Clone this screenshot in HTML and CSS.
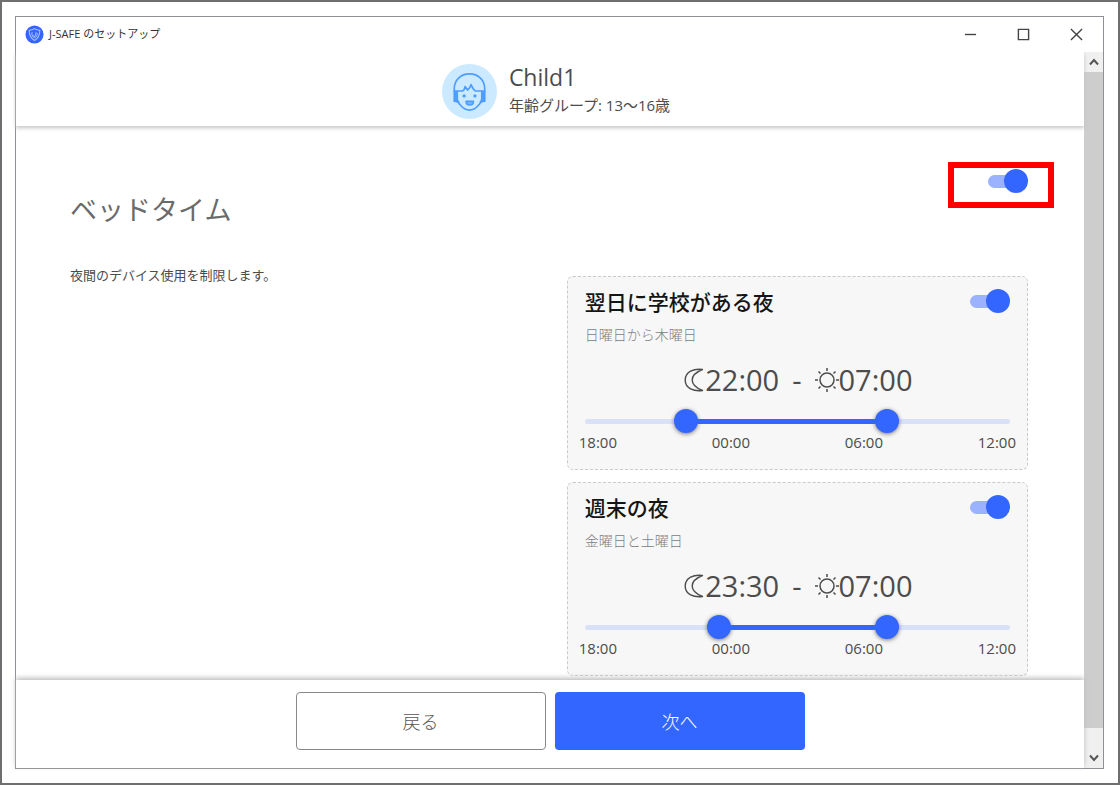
FILE: index.html
```html
<!DOCTYPE html>
<html lang="ja">
<head>
<meta charset="utf-8">
<meta name="viewport" content="width=device-width, initial-scale=1">
<title>J-SAFE のセットアップ</title>
<link rel="stylesheet" href="styles.css">
</head>
<body>
<svg class="defs" aria-hidden="true">
  <symbol id="moon" viewBox="0 0 20 24">
    <path d="M18.500 1.500C10 .3 1.200 3.500 1.200 12S10 23.700 18.500 22.500C13.500 20.500 8.200 17.500 8.200 12s5.300-8.500 10.300-10.500Z" fill="none" stroke="currentColor" stroke-width="1.400" stroke-linejoin="round"/>
  </symbol>
  <symbol id="sun" viewBox="0 0 24 24">
    <g fill="none" stroke="currentColor" stroke-width="1.500">
      <circle cx="12" cy="12" r="7"/>
      <path d="M12 0v3M12 21v3M0 12h3M21 12h3M3.500 3.500l2 2M18.500 18.500l2 2M3.500 20.500l2-2M18.500 5.500l2-2"/>
    </g>
  </symbol>
</svg>
<div class="window">
  <div class="titlebar">
    <svg class="logo" viewBox="0 0 20 20" aria-hidden="true">
      <circle cx="10" cy="10" r="9.500" fill="#3366ff"/>
      <path d="M10 3.800c1.800 1.300 3.600 1.600 5.600 1.700 0 5.100-1.400 8.400-5.600 10.800-4.200-2.400-5.600-5.700-5.600-10.800 2-.1 3.800-.4 5.600-1.700Z" fill="none" stroke="#a9beff" stroke-width="1.100"/>
      <path d="M11.800 7.500 10.300 12H9.200L7.800 10.200M7.500 7.400c-.9 3.200.3 5.400 2.500 6 2-.5 3.200-2.400 2.800-5" fill="none" stroke="#a9beff" stroke-width="1"/>
    </svg>
    <span class="app-name">J-SAFE のセットアップ</span>
    <div class="window-controls">
      <button type="button" aria-label="最小化"><svg viewBox="0 0 14 14"><path d="M1 7h12"/></svg></button>
      <button type="button" aria-label="最大化"><svg viewBox="0 0 14 14"><path d="M1.500 1.500h11v11h-11z"/></svg></button>
      <button type="button" aria-label="閉じる"><svg viewBox="0 0 14 14"><path d="m1 1 12 12M13 1 1 13"/></svg></button>
    </div>
  </div>

  <div class="viewport">
    <div class="page">
      <header class="profile">
        <svg class="avatar" viewBox="0 0 56 56" aria-hidden="true">
          <circle cx="28" cy="28" r="28" fill="#cbeaff"/>
          <g fill="none" stroke="#4d9cff" stroke-width="1.700" stroke-linejoin="round" stroke-linecap="round">
            <path d="M12.500 38V25c0-8.500 6.500-15 15.500-15s15.500 6.500 15.500 15v13"/>
            <path d="M12.500 27.500h8.500c1.700-.8 2.200-2.500 2.500-4.500l2.500 3.500c2-1.300 3-3 3.500-5.500 1.200 3 2.800 5 4.500 6.500h9.500"/>
            <path d="M15.500 28v7c0 3.500 5.500 12 12.500 12s12.500-8.500 12.500-12v-7"/>
            <path d="M14 29v8.500l2.500 1M42 29v8.500l-2.500 1" stroke-width="2.400"/>
            <path d="M24.500 38h7.500c0 5-7.500 5-7.500 0Z" fill="#79b7ff"/>
          </g>
          <circle cx="22.500" cy="32.500" r="1.700" fill="#4d9cff"/>
          <circle cx="33.500" cy="32.500" r="1.700" fill="#4d9cff"/>
        </svg>
        <div>
          <div class="profile-name">Child1</div>
          <div class="profile-age">年齢グループ: 13～16歳</div>
        </div>
      </header>

      <main class="content">
        <section class="intro">
          <h1>ベッドタイム</h1>
          <p>夜間のデバイス使用を制限します。</p>
        </section>

        <section class="settings">
          <div class="highlight">
            <input class="switch" type="checkbox" role="switch" aria-label="ベッドタイム" checked>
          </div>

          <div class="cards">
            <article class="card">
              <div class="card-head">
                <label for="school">翌日に学校がある夜</label>
                <input class="switch" id="school" type="checkbox" role="switch" checked>
              </div>
              <p class="days">日曜日から木曜日</p>
              <div class="times">
                <svg class="moon"><use href="#moon"/></svg><span>22:00</span><span class="dash">-</span><svg class="sun"><use href="#sun"/></svg><span>07:00</span>
              </div>
              <div class="slider">
                <div class="rail"><div class="fill" style="left:22.22%;width:50%"></div></div>
                <input type="range" min="0" max="1080" step="15" value="240" aria-label="開始時刻">
                <input type="range" min="0" max="1080" step="15" value="780" aria-label="終了時刻">
              </div>
              <div class="ticks"><span>18:00</span><span>00:00</span><span>06:00</span><span>12:00</span></div>
            </article>

            <article class="card">
              <div class="card-head">
                <label for="weekend">週末の夜</label>
                <input class="switch" id="weekend" type="checkbox" role="switch" checked>
              </div>
              <p class="days">金曜日と土曜日</p>
              <div class="times">
                <svg class="moon"><use href="#moon"/></svg><span>23:30</span><span class="dash">-</span><svg class="sun"><use href="#sun"/></svg><span>07:00</span>
              </div>
              <div class="slider">
                <div class="rail"><div class="fill" style="left:30.56%;width:41.67%"></div></div>
                <input type="range" min="0" max="1080" step="15" value="330" aria-label="開始時刻">
                <input type="range" min="0" max="1080" step="15" value="780" aria-label="終了時刻">
              </div>
              <div class="ticks"><span>18:00</span><span>00:00</span><span>06:00</span><span>12:00</span></div>
            </article>
          </div>
        </section>
      </main>

      <footer class="actions">
        <button class="back" type="button">戻る</button>
        <button class="next" type="button">次へ</button>
      </footer>
    </div>

    <div class="scrollbar">
      <button type="button" aria-label="上へスクロール"><svg viewBox="0 0 10 8"><path d="M1 6.500 5 2l4 4.500"/></svg></button>
      <div class="scroll-thumb"></div>
      <button type="button" aria-label="下へスクロール"><svg viewBox="0 0 10 8"><path d="M1 1.500 5 6l4-4.500"/></svg></button>
    </div>
  </div>
</div>
</body>
</html>
```
FILE: styles.css
```css
* { box-sizing: border-box; }

body {
  display: flex;
  min-height: 100vh;
  margin: 0;
  padding: 14px;
  border: 2px solid #6f6f6f;
  background: #fff;
  color: #4c4c4c;
  font-family: "Open Sans", "Noto Sans CJK JP", sans-serif;
}

h1, p { margin: 0; }
button { padding: 0; border: 0; background: none; font: inherit; }
.defs { position: absolute; width: 0; height: 0; }

.window {
  display: flex;
  flex: 1;
  flex-direction: column;
  margin: 0 0 0 -1px;
  border: 1px solid #8e9095;
}

.titlebar {
  z-index: 2;
  display: flex;
  align-items: center;
  height: 35px;
  padding-left: 9px;
  background: #fff;
}
.logo { width: 19px; height: 19px; margin-right: 5px; }
.app-name { color: #333; font-size: 11px; line-height: 16px; padding-bottom: 2px; }
.window-controls { display: flex; margin-left: auto; }
.window-controls button {
  display: grid;
  place-items: center;
  width: 53px;
  height: 35px;
}
.window-controls svg { width: 13px; height: 13px; }
.window-controls path { fill: none; stroke: #444; stroke-width: 1.5; }

.viewport { display: flex; flex: 1; }
.page { display: flex; flex: 1; flex-direction: column; }

.profile {
  z-index: 1;
  display: flex;
  align-items: center;
  justify-content: center;
  gap: 12px;
  height: 74px;
  padding: 4px 0 0 12px;
  background: #fff;
  box-shadow: 0 2px 4px #c4c4c4;
}
.avatar { width: 55px; height: 55px; }
.profile-name { font-size: 23px; line-height: 32px; }
.profile-age { padding-bottom: 4px; font-size: 15px; line-height: 24px; }

.content {
  display: grid;
  flex: 1;
  grid-template-columns: 14fr 13fr;
  padding: 36px 56px 2px 54px;
}
.intro { padding-top: 25px; }
.intro h1 {
  color: #6a6a6a;
  font-size: 27px;
  font-weight: 400;
  line-height: 46px;
}
.intro p { margin-top: 32px; font-size: 13px; line-height: 20px; }

.settings { display: flex; flex-direction: column; }
.highlight {
  display: flex;
  align-self: flex-end;
  margin: 0 -26px 68px 0;
  padding: 1px 20px 9px 34px;
  border: 6px solid #f00;
}

.switch {
  display: grid;
  flex: none;
  align-items: center;
  width: 40px;
  height: 24px;
  margin: 0;
  appearance: none;
}
.switch::before,
.switch::after { grid-area: 1 / 1; content: ""; }
.switch::before {
  width: 34px;
  height: 13px;
  border-radius: 7px;
  background: #9ab2ff;
}
.switch::after {
  justify-self: start;
  width: 24px;
  height: 24px;
  border-radius: 50%;
  background: #999;
}
.switch:checked::after { justify-self: end; background: #36f; }

.cards { display: grid; gap: 12px; }
.card {
  padding: 12px 17px 16px;
  border: 1px dashed #cacaca;
  border-radius: 6px;
  background: #f7f7f7;
}
.card-head {
  display: flex;
  justify-content: space-between;
  color: #151515;
  font-size: 21px;
  font-weight: 500;
  line-height: 26px;
}
.days { margin-top: 10px; color: #808080; font-size: 14px; font-weight: 300; line-height: 20px; }
.times {
  display: flex;
  align-items: center;
  justify-content: center;
  margin-top: 17px;
  padding-left: 2px;
  font-size: 29px;
  line-height: 36px;
}
.moon { width: 20px; height: 24px; margin-right: 1px; }
.sun { width: 24px; height: 24px; }
.dash { margin: 0 13px; }

.slider { display: grid; align-items: center; height: 24px; margin-top: 11px; }
.slider > * { grid-area: 1 / 1; }
.rail {
  height: 5px;
  padding: 0 12px;
  border-radius: 3px;
  background: #d9e1f7;
}
.fill { position: relative; height: 5px; background: #36f; }
.slider input {
  width: 100%;
  height: 24px;
  margin: 0;
  appearance: none;
  background: none;
  pointer-events: none;
}
.slider input::-webkit-slider-thumb {
  width: 24px;
  height: 24px;
  border-radius: 50%;
  appearance: none;
  background: #36f;
  box-shadow: 0 1px 4px #777;
  pointer-events: auto;
}
.ticks {
  display: flex;
  justify-content: space-between;
  margin: 0 -6px;
  padding-bottom: 1px;
  font-size: 15px;
  line-height: 19px;
}

.actions {
  z-index: 1;
  display: flex;
  justify-content: center;
  gap: 9px;
  padding: 12px 0 18px;
  background: #fff;
  box-shadow: 0 -2px 5px #bbb;
}
.actions button {
  width: 250px;
  height: 58px;
  border-radius: 4px;
  font-size: 18px;
  font-weight: 300;
}
.actions .back { border: 1px solid #888; color: #555; }
.actions .next { background: #36f; color: #fff; }

.scrollbar {
  display: flex;
  flex-direction: column;
  width: 19px;
  background: #f0f0f0;
}
.scrollbar button {
  display: grid;
  place-items: center;
  height: 20px;
}
.scrollbar svg { width: 10px; height: 8px; }
.scrollbar path { fill: none; stroke: #555; stroke-width: 2; }
.scroll-thumb { flex: 1; margin-bottom: 20px; background: #cdcdcd; }
```
